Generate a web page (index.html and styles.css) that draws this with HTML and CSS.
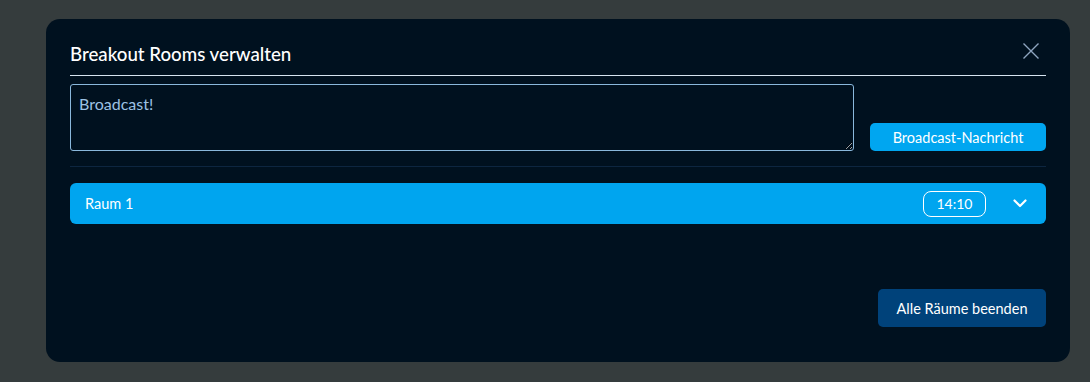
FILE: index.html
```html
<!DOCTYPE html>
<html lang="de">

<head>
    <meta charset="UTF-8">
    <meta name="viewport" content="width=device-width, initial-scale=1.0">
    <title>Breakout Rooms verwalten</title>
    <link rel="stylesheet" href="styles.css">
</head>

<body>
    <div class="modal">
        <div class="modal-header">
            <h2>Breakout Rooms verwalten</h2>
            <button class="close-btn" aria-label="Schließen">
                <svg width="16" height="16" viewBox="0 0 16 16">
                    <path d="M0.5 0.5 L15.5 15.5 M15.5 0.5 L0.5 15.5" stroke="#8ea5bf" stroke-width="1.4" fill="none"/>
                </svg>
            </button>
        </div>
        <div class="broadcast">
            <textarea class="broadcast-input" placeholder="Broadcast!"></textarea>
            <button class="btn-primary">Broadcast-Nachricht</button>
        </div>
        <div class="room-list">
            <div class="room">
                <span class="room-name">Raum 1</span>
                <span class="timer">14:10</span>
                <svg class="chevron" width="14" height="9" viewBox="0 0 14 9">
                    <path d="M1.5 1.5 L7 7 L12.5 1.5" stroke="#ffffff" stroke-width="2.2" fill="none" stroke-linecap="round" stroke-linejoin="round"/>
                </svg>
            </div>
        </div>
        <div class="modal-footer">
            <button class="btn-dark">Alle Räume beenden</button>
        </div>
    </div>
</body>
</html>
```

FILE: styles.css
```css
body {
    margin: 0;
    font-family: Lato, "Noto Sans", sans-serif;
    background-color: #353c3d;
    padding: 19px 20px 20px 46px;
}

.modal {
    width: 1024px;
    height: 343px;
    box-sizing: border-box;
    padding: 0 24px 35px;
    background-color: #00111f;
    border-radius: 14px;
    display: flex;
    flex-direction: column;
}

.modal-header {
    display: flex;
    align-items: flex-end;
    justify-content: space-between;
    height: 57px;
    box-sizing: border-box;
    padding-bottom: 10px;
    border-bottom: 1px solid #d6e4f0;
}

.modal-header h2 {
    margin: 0;
    font-size: 18.7px;
    font-weight: 500;
    color: #ffffff;
}

.close-btn {
    background: none;
    border: none;
    padding: 0;
    margin: 0 7px 6px 0;
    cursor: pointer;
    line-height: 0;
}

.broadcast {
    display: flex;
    align-items: flex-end;
    gap: 16px;
    margin-top: 8px;
    padding-bottom: 15px;
    border-bottom: 1px solid #0d2640;
}

.broadcast-input {
    width: 784px;
    height: 67px;
    box-sizing: border-box;
    padding: 9px 8px;
    background-color: #00111f;
    border: 1px solid #8ab8dc;
    border-radius: 3px;
    color: #9cc2e4;
    font-family: inherit;
    font-size: 16px;
    resize: vertical;
}

.broadcast-input::placeholder {
    color: #9cc2e4;
}

.btn-primary {
    width: 176px;
    height: 28px;
    border: none;
    border-radius: 5px;
    background-color: #00a6f0;
    color: #ffffff;
    font-family: inherit;
    font-size: 14.5px;
    cursor: pointer;
}

.room-list {
    margin-top: 16px;
}

.room {
    display: flex;
    align-items: center;
    height: 41px;
    padding: 0 19px 0 15px;
    background-color: #00a5ef;
    border-radius: 6px;
    color: #ffffff;
    font-size: 14.5px;
}

.room-name {
    flex: 1;
}

.timer {
    width: 63px;
    height: 26px;
    box-sizing: border-box;
    display: flex;
    align-items: center;
    justify-content: center;
    border: 1px solid #ffffff;
    border-radius: 8px;
    font-size: 14px;
    margin-right: 27px;
}

.modal-footer {
    margin-top: auto;
    display: flex;
    justify-content: flex-end;
}

.btn-dark {
    width: 168px;
    height: 38px;
    border: none;
    border-radius: 5px;
    background-color: #00427a;
    color: #ffffff;
    font-family: inherit;
    font-size: 14.5px;
    cursor: pointer;
}
```
